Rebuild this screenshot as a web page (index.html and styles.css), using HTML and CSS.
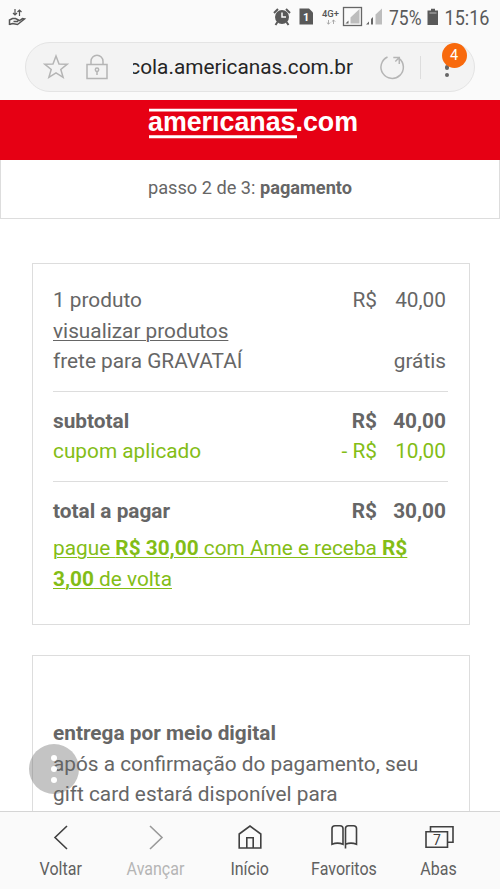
FILE: index.html
```html
<!DOCTYPE html>
<html lang="pt-BR">
<head>
<meta charset="utf-8">
<meta name="viewport" content="width=device-width, initial-scale=1">
<title>americanas.com - pagamento</title>
<link rel="stylesheet" href="styles.css">
</head>
<body>
<div class="screen">
  <header class="browser-top">
    <svg class="status" viewBox="0 0 500 35" width="500" height="35">
      <g fill="none" stroke="#555" stroke-width="1.4">
        <path d="M15 9v6M13 13l2 2 2-2M19.500 16v-6M17.500 12l2-2 2 2" stroke-width="1.200"/>
        <path d="M9.500 25v-5l3-1.500h3l3 1.500-1 1.500h-4M9.500 24.500l3-1 5 1 7-5.500-2-.4-3.500 2.400" stroke-width="1.500"/>
      </g>
      <g fill="#595959">
        <circle cx="282" cy="17" r="7"/>
        <path d="M274 13l4-4M290 13l-4-4M277.500 22l-2 3M286.500 22l2 3" stroke="#595959" stroke-width="2"/>
        <path d="M282 12.500v4.500h4" stroke="#fafafa" stroke-width="1.500" fill="none"/>
        <path d="M299.500 8.500h9.500l4 4v12h-13.500z"/>
        <path d="M428 10.500h3v-1.800h4v1.800h3v14.500h-10.500v-14.500z"/>
        <path d="M429.500 13h7" stroke="#aaa" stroke-width="1.200"/>
      </g>
      <text class="sim" x="303" y="21">1</text>
      <text class="network" x="322" y="16.500" textLength="17" lengthAdjust="spacingAndGlyphs">4G+</text>
      <path d="M328.500 20v4M326.800 22.500l1.700 1.700 1.700-1.700M333.500 24v-4M331.800 21.700l1.700-1.700 1.700 1.700" fill="none" stroke="#999" stroke-width=".8"/>
      <rect x="343.500" y="7.500" width="18" height="18" fill="none" stroke="#666" stroke-width="1.300"/>
      <path d="M350.500 23.500v-6l9-8.500v14.500z" fill="#bdbdbd"/>
      <path d="M345.500 23.500l3-3v3z" fill="#666"/>
      <path d="M375.500 24.500v-10l6.500-6v16z" fill="#bdbdbd"/>
      <path d="M366 24.500l3-3v3zM371 24.500v-5.500l2-2v7.500z" fill="#666"/>
      <text class="status-text" x="389" y="25" textLength="32.500" lengthAdjust="spacingAndGlyphs">75%</text>
      <text class="status-text" x="444.500" y="25" textLength="45" lengthAdjust="spacingAndGlyphs">15:16</text>
    </svg>
    <div class="address">
      <svg class="star" viewBox="0 0 26 26" width="26" height="26"><path d="M13 2l3 7.900 8.300.3-6.500 5.200 2.300 8-7.100-4.600-7.100 4.600 2.300-8L1.700 10.200l8.300-.3z"/></svg>
      <svg class="lock" viewBox="0 0 24 26" width="24" height="26"><path d="M2 10.500h20v14H2zM6 10.500V7.300a6 6 0 0 1 12 0v3.200"/><circle cx="12" cy="15.700" r="1.700"/><path d="M12 17.500v3.500"/></svg>
      <div class="url"><span>cola.americanas.com.br</span></div>
      <svg class="reload" viewBox="0 0 26 26" width="26" height="26"><path d="M8.500 3A11.200 11.200 0 1 0 20 4.300M20.300 10V3.500h-6M20.300 3.500l-4 4"/></svg>
      <span class="divider"></span>
      <div class="menu"><i></i><i></i><i></i><b>4</b></div>
    </div>
  </header>
  <main>
    <div class="brand">
      <svg viewBox="0 0 212 42" width="212" height="42">
        <path d="M1 6.100h148M1 32.800h148" stroke="#fff" stroke-width="2.900"/>
        <text x="0" y="27" textLength="210" lengthAdjust="spacingAndGlyphs">amerıcanas.com</text>
      </svg>
    </div>
    <div class="step"><span>passo 2 de 3: <b>pagamento</b></span></div>
    <section class="card summary">
      <div class="group">
        <div class="row"><span>1 produto</span><span class="price"><span>R$</span><span>40,00</span></span></div>
        <div class="row"><a>visualizar produtos</a></div>
        <div class="row"><span>frete para GRAVATAÍ</span><span>grátis</span></div>
      </div>
      <div class="group">
        <div class="row strong"><span>subtotal</span><span class="price"><span>R$</span><span>40,00</span></span></div>
        <div class="row green"><span>cupom aplicado</span><span class="price"><span>- R$</span><span>10,00</span></span></div>
      </div>
      <div class="group">
        <div class="row strong"><span>total a pagar</span><span class="price"><span>R$</span><span>30,00</span></span></div>
      </div>
      <a class="ame green">pague <b>R$ 30,00</b> com Ame e receba <b>R$<br>3,00</b> de volta</a>
    </section>
    <section class="card delivery">
      <b>entrega por meio digital</b>
      <p>após a confirmação do pagamento, seu<br>gift card estará disponível para</p>
      <div class="assist"><i></i><i></i><i></i></div>
    </section>
  </main>
  <nav>
    <div class="tab"><svg viewBox="0 0 30 30" width="30" height="30"><path d="M21 4L9 15.500 21 27"/></svg><span>Voltar</span></div>
    <div class="tab off"><svg viewBox="0 0 30 30" width="30" height="30"><path d="M9 4l12 11.500L9 27"/></svg><span>Avançar</span></div>
    <div class="tab"><svg viewBox="0 0 30 30" width="30" height="30"><path d="M4.200 12L15 4l10.800 8V26H4.200zM11.800 26V15.700h6.400V26"/></svg><span>Início</span></div>
    <div class="tab"><svg viewBox="0 0 30 30" width="30" height="30"><path d="M14 22.300V6.500Q14 3.800 11 3.800H6Q3 3.800 3 6.500v15.800Q8.500 20 14 22.300zM16.500 26.500v-20Q16.500 3.800 19.500 3.800h5q3 0 3 2.700v15.800Q22 20 16.500 22.300"/></svg><span>Favoritos</span></div>
    <div class="tab"><svg viewBox="0 0 30 30" width="30" height="30"><path d="M2 9.800h21.500v15.500H2zM6.500 9.800V4.800H29v15.500h-5.500"/><text x="9" y="22.500">7</text></svg><span>Abas</span></div>
  </nav>
</div>
</body>
</html>
```
FILE: styles.css
```css
* { box-sizing: border-box; }
body {
  margin: 0;
  background: #fff;
  color: #666;
  font-family: Roboto, "Liberation Sans", sans-serif;
}
.screen { width: 500px; height: 889px; display: flex; flex-direction: column; overflow: hidden; }
.browser-top { height: 100px; flex: none; background: #fafafa; }
.status { display: block; }
.status-text { font-size: 20.5px; fill: #595959; }
.network { font-size: 9.5px; font-weight: 500; fill: #555; }
.sim { font-size: 11px; font-weight: 700; fill: #fff; }
.address {
  width: 450px; height: 50px; margin: 7px 25px 0;
  display: flex; align-items: center;
  background: #f3f3f3; border: 1px solid #e4e4e4; border-radius: 25px;
}
.address svg { flex: none; fill: none; stroke: #b5b5b5; stroke-width: 1.5; }
.star { margin-left: 17px; }
.lock { margin-left: 16px; }
.url {
  width: 220px; height: 30px; margin-left: 24px;
  display: flex; justify-content: flex-end;
  overflow: hidden; white-space: nowrap;
  color: #252525; font-size: 20.8px; line-height: 31px;
}
.reload { margin-left: 25.5px; }
.divider { width: 1px; height: 23px; margin-left: 15px; background: #ddd; }
.menu { position: relative; display: flex; flex-direction: column; gap: 3px; margin: 1px 0 0 24px; }
.menu i { width: 4.5px; height: 4.5px; border-radius: 50%; background: #666; }
.menu b {
  position: absolute; left: -3px; top: -15px; width: 25px; height: 25px;
  border-radius: 50%; background: #f8690c; color: #fff;
  font-size: 14.5px; font-weight: 400; line-height: 26px; text-align: center;
}
main { flex: 1; min-height: 0; overflow: hidden; background: #fff; }
.brand { height: 60px; background: #e60014; padding: 4px 0 0 148px; }
.brand svg { display: block; }
.brand text { font: 700 27px "Liberation Sans", sans-serif; fill: #fff; }
.step {
  height: 59px; border: 1px solid #ddd; border-top: 0;
  text-align: center; font-size: 18.2px; line-height: 55px;
}
.card { width: 438px; margin-left: 31.5px; border: 1px solid #ddd; font-size: 20.8px; line-height: 30.5px; }
.summary { height: 362px; margin-top: 44px; padding: 21px 21px 0 20.5px; }
.group { padding-bottom: 14px; margin-bottom: 14px; border-bottom: 1px solid #ddd; }
.group:nth-child(3) { padding-bottom: 0; margin-bottom: 7px; border: 0; }
.row { display: flex; justify-content: space-between; padding-right: 1.5px; }
.row a, .ame { text-decoration: underline; text-decoration-thickness: 1px; text-underline-offset: 2px; }
.price { display: flex; justify-content: flex-end; }
.price span:last-child { width: 69px; text-align: right; }
.strong { font-weight: 700; }
.green { color: #83bd16; }
.ame { display: block; white-space: nowrap; }
.delivery { position: relative; height: 300px; margin-top: 29.5px; padding: 62.5px 21px 0 20.5px; }
.delivery p { margin: 0; white-space: nowrap; }
.assist {
  position: absolute; left: -4px; top: 88px; width: 50px; height: 50px; border-radius: 50%;
  display: flex; flex-direction: column; align-items: center; justify-content: center; gap: 5px;
  background: rgba(100, 100, 100, .38);
}
.assist i { width: 6px; height: 6px; border-radius: 50%; background: #fff; }
nav {
  height: 78px; flex: none; padding: 0 14px; display: flex;
  background: #fafafa; border-top: 1px solid #d5d5d5;
}
.tab { width: 94.4px; display: flex; flex-direction: column; align-items: center; padding-top: 10px; color: #606060; }
.tab svg { flex: none; fill: none; stroke: #404040; stroke-width: 1.6; }
.tab text { font-size: 14px; fill: #404040; stroke: none; }
.tab span { margin-top: 6px; font-size: 18px; line-height: 22px; transform: scaleX(.89); }
.off { color: #b5b5b5; }
.off svg { stroke: #999; }
```
